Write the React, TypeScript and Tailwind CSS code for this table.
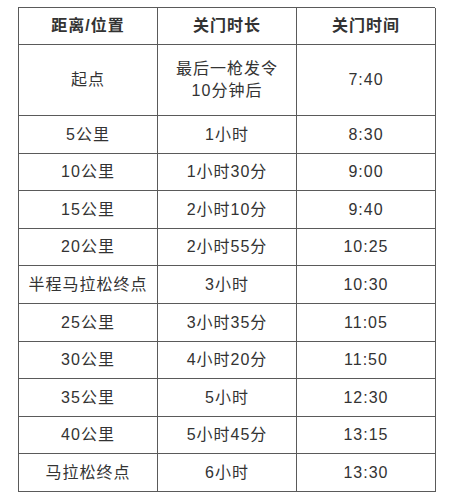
import React from "react";

const rows: [string, string, string][] = [
  ["起点", "最后一枪发令\n10分钟后", "7:40"],
  ["5公里", "1小时", "8:30"],
  ["10公里", "1小时30分", "9:00"],
  ["15公里", "2小时10分", "9:40"],
  ["20公里", "2小时55分", "10:25"],
  ["半程马拉松终点", "3小时", "10:30"],
  ["25公里", "3小时35分", "11:05"],
  ["30公里", "4小时20分", "11:50"],
  ["35公里", "5小时", "12:30"],
  ["40公里", "5小时45分", "13:15"],
  ["马拉松终点", "6小时", "13:30"],
];

export default function App() {
  return (
    <div
      className="w-[454px] h-[495px] bg-white pt-[7px] pl-[18px]"
      style={{ fontFamily: '"Liberation Sans", "Noto Sans CJK SC", sans-serif' }}
    >
      <div className="w-[417px] grid grid-cols-[139px_139px_139px] grid-rows-[37px_71px_38px_37px_38px_37px_38px_38px_37px_38px_37px_38px] border-l border-t border-[#5a5a5a] text-[#333] text-[16px] tracking-[1px]">
        {["距离/位置", "关门时长", "关门时间"].map((h) => (
          <div key={h} className="border-r border-b border-[#5a5a5a] flex items-center justify-center font-bold">
            {h}
          </div>
        ))}
        {rows.map((r, i) =>
          r.map((c, j) => (
            <div
              key={`${i}-${j}`}
              className="border-r border-b border-[#5a5a5a] flex items-center justify-center text-center whitespace-pre-line leading-[22px]"
            >
              {c}
            </div>
          ))
        )}
      </div>
    </div>
  );
}
